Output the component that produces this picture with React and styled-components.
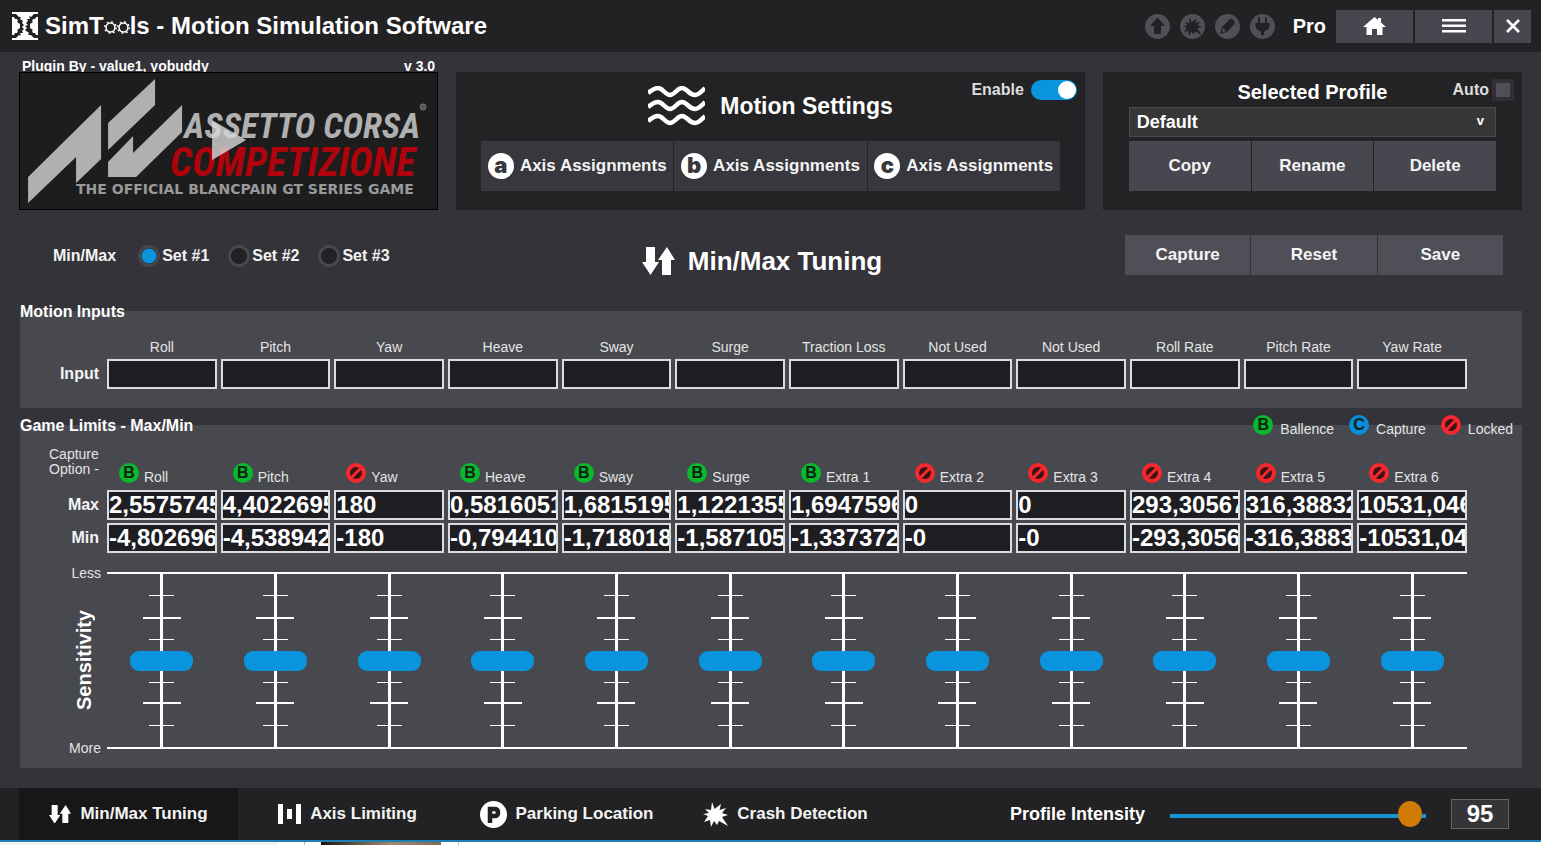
import React, { useState } from 'react'
import styled, { createGlobalStyle, css } from 'styled-components'

const GlobalStyle = createGlobalStyle`
*, *::before, *::after {
    box-sizing: border-box;
}

body {
    margin: 0;
    background: #34333a;
    color: #fff;
    font-family: "Liberation Sans", Arial, sans-serif;
}

h1, h2, h3, p {
    margin: 0;
    font-weight: 700;
}

button, input, select {
    margin: 0;
    font-family: inherit;
    color: inherit;
}
`

const Page = styled.div`
    min-height: 100vh;
    display: flex;
    flex-direction: column;
`

/* ---------- top bar ---------- */

const TopBar = styled.header`
    height: 52px;
    padding: 0 10px;
    display: flex;
    align-items: center;
    justify-content: space-between;
    background: #222224;
`

const Brand = styled.div`
    display: flex;
    align-items: center;
    gap: 6px;
`

const Title = styled.h1`
    font-size: 24px;
    line-height: 28px;
    white-space: nowrap;

    svg {
        display: inline-block;
    }
`

const TopRight = styled.div`
    display: flex;
    align-items: center;
`

const StatusIcons = styled.div`
    display: flex;
    gap: 10px;
    margin-right: 18px;
`

const Edition = styled.span`
    font-size: 20px;
    font-weight: 700;
    margin-right: 10px;
`

const WindowButtons = styled.div`
    display: flex;
    gap: 2px;
`

const Button = styled.button`
    border: 0;
    padding: 0;
    display: flex;
    align-items: center;
    justify-content: center;
    gap: 6px;
    cursor: pointer;
    color: #f4f4f4;
    font-size: 17px;
    font-weight: 700;
    white-space: nowrap;
    background: ${props => props.tone || '#48474f'};
`

const WindowButton = styled(Button)`
    width: ${props => (props.small ? '37px' : '77px')};
    height: 33px;
`

/* ---------- main area ---------- */

const Main = styled.main`
    padding: 7px 19px 20px;
`

const TopGrid = styled.div`
    display: grid;
    grid-template-columns: 2fr 3fr 2fr;
    gap: 18px;
    align-items: end;
`

const PluginInfo = styled.div`
    height: 13px;
    padding: 0 3px;
    display: flex;
    justify-content: space-between;
    font-size: 14px;
    font-weight: 700;
    line-height: 14px;
`

const GamePicture = styled.button`
    position: relative;
    display: block;
    width: 100%;
    height: 138px;
    padding: 0;
    border: 1px solid #000;
    background: #1d1d1d;
    cursor: pointer;

    svg {
        display: block;
        width: 100%;
        height: 100%;
    }
`

const Panel = styled.section`
    height: 138px;
    padding: 7px 8px 0;
    background: #232325;
`

const PanelHead = styled.div`
    display: grid;
    grid-template-columns: 1fr auto 1fr;
    height: ${props => props.height};
`

const MotionTitle = styled.h2`
    grid-column: 2;
    height: 54px;
    display: flex;
    align-items: center;
    gap: 15px;
    font-size: 23px;
    font-weight: 900;
`

const ProfileTitle = styled.h2`
    grid-column: 2;
    font-size: 20px;
    line-height: 26px;
`

const SwitchLabel = styled.label`
    justify-self: end;
    align-self: start;
    display: flex;
    align-items: center;
    gap: ${props => props.gap};
    font-size: 16px;
    font-weight: 700;
    line-height: 22px;
    color: #ddd;
`

const Toggle = styled.input`
    appearance: none;
    width: 46px;
    height: 20px;
    border-radius: 10px;
    background: #0b94de;
    display: flex;
    align-items: center;
    justify-content: flex-end;
    padding: 1px;

    &::before {
        content: '';
        width: 18px;
        height: 18px;
        border-radius: 50%;
        background: #fff;
    }

    &:not(:checked) {
        justify-content: flex-start;
        background: #48474f;
    }
`

const AutoCheck = styled.input`
    appearance: none;
    width: 22px;
    height: 22px;
    border: 4px solid #302f36;
    background: #504f57;

    &:checked {
        background: #0b94de;
    }
`

const ButtonRow = styled.div`
    display: grid;
    grid-template-columns: repeat(3, 1fr);
    gap: 1px;
    margin: 0 ${props => props.inset || '0'};

    ${Button} {
        height: ${props => props.height || '50px'};
    }
`

const LetterDisc = styled.span`
    width: 26px;
    height: 26px;
    border-radius: 50%;
    background: #fff;
    color: #38373d;
    font-family: Inter, "Liberation Sans", sans-serif;
    font-size: 22px;
    font-weight: 900;
    line-height: 24px;
    text-align: center;
`

const SelectBox = styled.div`
    position: relative;
    margin: 2px 18px 4px;

    select {
        display: block;
        appearance: none;
        width: 100%;
        height: 30px;
        padding: 0 7px;
        border: 1px solid #4a4a4c;
        border-radius: 0;
        background: #373738;
        font-size: 18px;
        font-weight: 700;
    }

    span {
        position: absolute;
        right: 12px;
        top: 6px;
        font-size: 13px;
        font-weight: 700;
        line-height: 16px;
        pointer-events: none;
    }
`

/* ---------- set row ---------- */

const SetRow = styled.div`
    margin-top: 25px;
    height: 76px;
    padding: 0 19px 0 2px;
    display: grid;
    grid-template-columns: 1fr auto 1fr;
    align-items: start;
`

const RadioGroup = styled.div`
    height: 42px;
    padding-left: 32px;
    display: flex;
    align-items: center;
    font-size: 16px;
    font-weight: 700;
    white-space: nowrap;
    color: #f4f4f4;
`

const RadioLabel = styled.label`
    margin-left: 19px;
    display: flex;
    align-items: center;
    gap: 2px;

    &:first-of-type {
        margin-left: 22px;
    }
`

const Radio = styled.input`
    appearance: none;
    width: 22px;
    height: 22px;
    border: 3px solid #48474d;
    border-radius: 50%;
    background: #222224;

    &:checked {
        background: radial-gradient(circle, #0b94de 0 7px, #222224 8px);
    }
`

const SetTitle = styled.h2`
    padding-top: 11px;
    display: flex;
    align-items: center;
    gap: 13px;
    font-size: 26px;
    line-height: 30px;
`

const SetButtons = styled.div`
    width: 378px;
    justify-self: end;
`

/* ---------- data panels ---------- */

const DataPanel = styled.section`
    margin-left: 1px;
    margin-bottom: ${props => (props.last ? '0' : '17px')};
    padding-bottom: ${props => (props.last ? '12px' : '19px')};
    background: #48484f;
`

const DataHead = styled.div`
    display: flex;
    justify-content: space-between;
    align-items: center;
    height: 18px;
    padding-right: 9px;
    transform: translateY(-8px);

    h3 {
        font-size: 16px;
        line-height: 18px;
    }
`

const Legend = styled.div`
    display: flex;
    gap: 15px;
`

const AxisGrid = styled.div`
    display: grid;
    grid-template-columns: 83px repeat(12, minmax(0, 1fr));
    column-gap: 4px;
    row-gap: ${props => props.rowGap};
    padding-top: ${props => props.top};
    padding-right: 55px;
    align-items: center;
`

const RowLabel = styled.span`
    padding-right: 4px;
    text-align: right;
    font-size: 16px;
    font-weight: 700;
    color: #f4f4f4;
`

const SmallText = styled.span`
    font-size: 14px;
    line-height: 16px;
    color: #e4e4e4;
    white-space: nowrap;
    text-align: ${props => props.align || 'left'};
`

const CaptureOption = styled(SmallText)`
    min-height: 40px;
    padding-left: 29px;
    line-height: 15px;
    align-self: start;
    white-space: normal;
`

const Field = styled.input`
    width: 100%;
    height: 30px;
    padding: 0;
    border: 2px solid #dcdcde;
    border-radius: 0;
    background: #1d1d22;
    font-size: 24px;
    font-weight: 700;
    line-height: 26px;
`

const Option = styled.div`
    display: flex;
    align-items: flex-end;
    gap: ${props => (props.inHead ? '7px' : '5px')};
    align-self: end;
    padding: ${props => (props.inHead ? '0' : '0 0 2px 12px')};
`

const Badge = styled.span`
    width: 20px;
    height: 20px;
    flex: none;
    margin-bottom: 2px;
    border-radius: 50%;
    text-align: center;
    font-size: 16px;
    font-weight: 700;
    line-height: 20px;
    color: #10220f;
    background: ${props => props.color};

    svg {
        display: block;
    }
`

const Sensitivity = styled.div`
    display: grid;
    grid-template-columns: 83px minmax(0, 1fr);
    column-gap: 4px;
    margin-top: 12px;
    padding-right: 55px;
`

const Scale = styled.div`
    display: grid;
    grid-template-rows: auto 1fr auto;
    padding-right: 2px;
    justify-items: end;

    h3 {
        align-self: center;
        margin-right: 6px;
        writing-mode: vertical-rl;
        transform: rotate(180deg);
        font-size: 20px;
        font-weight: 900;
        line-height: 22px;
    }
`

const Sliders = styled.div`
    display: grid;
    grid-template-columns: repeat(12, minmax(0, 1fr));
    column-gap: 4px;
    justify-items: center;
    margin: 7px 0;
    border-top: 2px solid #fff;
    border-bottom: 2px solid #fff;
`

const line = 'linear-gradient(#fff, #fff)'

const AxisSlider = styled.input`
    appearance: none;
    writing-mode: vertical-lr;
    width: 63px;
    height: 173px;
    background:
        ${line} 50% 50% / 3px 100%,
        ${line} 50% 12% / 25px 1px,
        ${line} 50% 25% / 38px 2px,
        ${line} 50% 38% / 25px 1px,
        ${line} 50% 63% / 25px 1px,
        ${line} 50% 75% / 38px 2px,
        ${line} 50% 88% / 25px 1px;
    background-repeat: no-repeat;

    &::-webkit-slider-thumb {
        appearance: none;
        width: 63px;
        height: 20px;
        border-radius: 9px;
        background: #0b94de;
    }
`

/* ---------- bottom bar ---------- */

const BottomBar = styled.footer`
    height: 54px;
    padding: 0 32px 0 19px;
    display: flex;
    justify-content: space-between;
    background: #222224;
    border-bottom: 2px solid #1d7fb4;
`

const Tabs = styled.nav`
    display: flex;
`

const Tab = styled(Button)`
    width: 219px;
    gap: 9px;
    background: transparent;

    ${props => props.active && css`
        background: #171717;
    `}
`

const Intensity = styled.div`
    display: flex;
    align-items: center;

    label {
        margin-right: 25px;
        font-size: 18px;
        font-weight: 700;
    }
`

const IntensityRange = styled.input`
    appearance: none;
    width: 264px;
    height: 26px;
    background: linear-gradient(#1593d3, #1593d3) 0 60% / 256px 4px no-repeat;

    &::-webkit-slider-thumb {
        appearance: none;
        width: 24px;
        height: 26px;
        border-radius: 50%;
        background: #cf7a04;
    }
`

const IntensityValue = styled.input`
    width: 58px;
    height: 30px;
    margin-left: 17px;
    padding: 0;
    border: 1px solid #66666a;
    background: #353538;
    font-size: 24px;
    font-weight: 700;
    text-align: center;
`

const Behind = styled.div`
    flex: 1;
    min-height: 3px;
    background:
        linear-gradient(90deg, #19130f, #6d5b49 40px, #a08a70 70px, #7c6a57) 321px 0 / 120px 100% no-repeat,
        linear-gradient(#bbb, #bbb) 304px 0 / 1px 100% no-repeat,
        linear-gradient(#bbb, #bbb) 458px 0 / 1px 100% no-repeat,
        linear-gradient(#f3f3f3, #f3f3f3) 0 0 / 278px 100% no-repeat,
        #fff;
`

/* ---------- drawings ---------- */

const SimLogo = () => (
    <svg width="29" height="28" viewBox="0 0 29 28" fill="#fff">
        <path d="M2 0H28V2H2ZM2 26H28V28H2Z" />
        <path d="M2 5L4 5L5 7L7 7L8 9L7 10L10 12V16L7 18L8 19L7 21L5 21L4 23L2 23Z" />
        <path d="M28 5L26 5L25 7L23 7L22 9L23 10L20 12V16L23 18L22 19L23 21L25 21L26 23L28 23Z" />
        <path d="M6 2H24L21 5L19 4L20 7L17 7L18 9L16 11L18 13L15 14L17 16L15 18L19 21L18 23L21 23L24 26H6L9 23L11 24L10 21L13 21L12 19L14 17L12 15L14 13L12 11L13 9L10 7L11 5L9 5Z" />
    </svg>
)

const Gear = () => (
    <svg width="13" height="13" viewBox="-6.5 -6.5 13 13">
        <circle r="4.400" fill="none" stroke="#fff" strokeWidth="1.500" />
        <circle r="5.700" fill="none" stroke="#fff" strokeWidth="1.500" strokeDasharray="1.800 2.677" />
    </svg>
)

const burst = 'M9 0L11.500 7L18 2L16.500 8L23 6L19 11L25 13L19 15L25 24L16 19L14 23L11 19L8 25L7 18L1 20L5 14L0 12L6 11L2 7L8 8Z'

const StatusIcon = ({ name }) => (
    <svg width="25" height="25" viewBox="0 0 25 25" fill="#222224">
        <circle cx="12.5" cy="12.5" r="12.5" fill="#515057" />
        {name === 'up' && <path d="M12.5 3.5L20 12H16V20H9V12H5Z" />}
        {name === 'crash' && <path d={burst} transform="translate(3 3) scale(.76)" />}
        {name === 'pen' && (
            <path d="M5 20L7 13L14.500 5.500Q16.500 4 18.500 6Q20.500 8 19 10.500L12 18ZM8 14L6.800 18.200L11 17Z" fillRule="evenodd" />
        )}
        {name === 'plug' && (
            <path d="M8 3.500H10V9H15V3.500H17V9H19.500V12Q19 16 14 17.500V21H11V17.500Q6 16 5.500 12V9H8Z" />
        )}
    </svg>
)

const HomeIcon = () => (
    <svg width="23" height="19" viewBox="0 0 23 19" fill="#fff">
        <path d="M11.500 0L15 3V1H18V5.500L23 10H19.500V18H14V12H9V18H3.500V10H0Z" />
    </svg>
)

const MenuIcon = () => (
    <svg width="24" height="14" viewBox="0 0 24 14" fill="#fff">
        <path d="M0 0H24V2.500H0ZM0 5.500H24V8H0ZM0 11H24V13.500H0Z" />
    </svg>
)

const CloseIcon = () => (
    <svg width="14" height="14" viewBox="0 0 14 14" stroke="#fff" strokeWidth="2.600">
        <path d="M1 1L13 13M13 1L1 13" />
    </svg>
)

const Waves = () => (
    <svg width="57" height="40" viewBox="0 0 57 40" fill="none" stroke="#fff" strokeWidth="4.500">
        {[6, 20, 34].map(y => (
            <path key={y} d={`M0 ${y + 1}C4 ${y - 2} 6 ${y - 4} 10 ${y - 4}C15 ${y - 4} 17 ${y + 3} 22 ${y + 3}C27 ${y + 3} 29 ${y - 4} 34 ${y - 4}C39 ${y - 4} 41 ${y + 3} 47 ${y + 3}C51 ${y + 3} 53 ${y} 57 ${y - 4}`} />
        ))}
    </svg>
)

const UpDown = ({ size }) => (
    <svg width={size} height={size * 28 / 33} viewBox="0 0 33 28" fill="#fff">
        <path d="M4 0H13V15H17L8.500 28L0 15H4Z" />
        <path d="M25 0L33 13H29V28H20V13H16Z" />
    </svg>
)

const Bars = () => (
    <svg width="23" height="20" viewBox="0 0 23 20" fill="#fff">
        <path d="M0 0H5V20H0ZM9 5H14V15H9ZM18 0H23V20H18Z" />
    </svg>
)

const Parking = () => (
    <svg width="27" height="27" viewBox="0 0 27 27">
        <circle cx="13.500" cy="13.500" r="13.500" fill="#fff" />
        <path d="M10 22V8H14.500Q18 8 18 11.500Q18 15 14.500 15H10" fill="none" stroke="#222224" strokeWidth="4.500" />
    </svg>
)

const Crash = () => (
    <svg width="25" height="25" viewBox="0 0 25 25" fill="#fff">
        <path d={burst} />
    </svg>
)

const Locked = () => (
    <svg width="20" height="20" viewBox="0 0 20 20">
        <circle cx="10" cy="10" r="8" fill="#3a1315" stroke="#f5282d" strokeWidth="4" />
        <path d="M5 15L15 5" stroke="#f5282d" strokeWidth="3" />
    </svg>
)

const narrow = 'Roboto Condensed, Open Sans Condensed, Liberation Sans'

const GameLogo = () => (
    <svg viewBox="0 0 417 136">
        <g fill="#b0b0b0">
            <path d="M81 32V86L56 110V84L8 130V104Z" />
            <path d="M135 6V32L88 77V50Z" />
            <path d="M162 32V59L116 104H88V89L113 63V80Z" />
            <text x="164" y="65" fontSize="35" fontWeight="700" fontStyle="italic" fontFamily={narrow}>ASSETTO CORSA</text>
            <text x="56" y="121" fontSize="14" fontWeight="700" fontFamily="DejaVu Sans" fill="#999">THE OFFICIAL BLANCPAIN GT SERIES GAME</text>
        </g>
        <text x="150" y="103" fontSize="40" fontWeight="700" fontStyle="italic" fill="#b0030c" fontFamily={narrow}>COMPETIZIONE</text>
        <circle cx="403" cy="34" r="3" fill="#555" stroke="#777" />
        <path d="M192 47L226 67L192 87Z" fill="#d8d8d8" fillOpacity=".8" />
    </svg>
)

const OptionBadge = ({ kind }) => {
    if (kind === 'L') return <Badge><Locked /></Badge>
    return <Badge color={kind === 'B' ? '#08b92c' : '#0b8ddb'}>{kind}</Badge>
}

/* ---------- data ---------- */

const inputs = ['Roll', 'Pitch', 'Yaw', 'Heave', 'Sway', 'Surge', 'Traction Loss', 'Not Used', 'Not Used', 'Roll Rate', 'Pitch Rate', 'Yaw Rate']

const limits = [
    { name: 'Roll', kind: 'B', max: '2,5575745', min: '-4,802696' },
    { name: 'Pitch', kind: 'B', max: '4,4022695', min: '-4,538942' },
    { name: 'Yaw', kind: 'L', max: '180', min: '-180' },
    { name: 'Heave', kind: 'B', max: '0,5816051', min: '-0,794410' },
    { name: 'Sway', kind: 'B', max: '1,6815195', min: '-1,718018' },
    { name: 'Surge', kind: 'B', max: '1,1221355', min: '-1,587105' },
    { name: 'Extra 1', kind: 'B', max: '1,6947596', min: '-1,337372' },
    { name: 'Extra 2', kind: 'L', max: '0', min: '-0' },
    { name: 'Extra 3', kind: 'L', max: '0', min: '-0' },
    { name: 'Extra 4', kind: 'L', max: '293,30567', min: '-293,3056' },
    { name: 'Extra 5', kind: 'L', max: '316,38832', min: '-316,3883' },
    { name: 'Extra 6', kind: 'L', max: '10531,046', min: '-10531,04' },
]

const tabs = [
    { name: 'Min/Max Tuning', icon: <UpDown size={22} /> },
    { name: 'Axis Limiting', icon: <Bars /> },
    { name: 'Parking Location', icon: <Parking /> },
    { name: 'Crash Detection', icon: <Crash /> },
]

const App = () => {
    const [tab, setTab] = useState('Min/Max Tuning')
    const [intensity, setIntensity] = useState(95)

    return (
        <Page>
            <GlobalStyle />
            <TopBar>
                <Brand>
                    <SimLogo />
                    <Title>SimT<Gear /><Gear />ls - Motion Simulation Software</Title>
                </Brand>
                <TopRight>
                    <StatusIcons>
                        {['up', 'crash', 'pen', 'plug'].map(name => <StatusIcon key={name} name={name} />)}
                    </StatusIcons>
                    <Edition>Pro</Edition>
                    <WindowButtons>
                        <WindowButton aria-label="Home"><HomeIcon /></WindowButton>
                        <WindowButton aria-label="Menu"><MenuIcon /></WindowButton>
                        <WindowButton small="true" aria-label="Close"><CloseIcon /></WindowButton>
                    </WindowButtons>
                </TopRight>
            </TopBar>

            <Main>
                <TopGrid>
                    <div>
                        <PluginInfo>
                            <span>Plugin By - value1, yobuddy</span>
                            <span>v 3.0</span>
                        </PluginInfo>
                        <GamePicture aria-label="Play"><GameLogo /></GamePicture>
                    </div>

                    <Panel>
                        <PanelHead height="62px">
                            <MotionTitle><Waves />Motion Settings</MotionTitle>
                            <SwitchLabel gap="7px">
                                Enable
                                <Toggle type="checkbox" role="switch" defaultChecked />
                            </SwitchLabel>
                        </PanelHead>
                        <ButtonRow inset="17px">
                            {['a', 'b', 'c'].map(letter => (
                                <Button key={letter} tone="#38373d">
                                    <LetterDisc>{letter}</LetterDisc>
                                    Axis Assignments
                                </Button>
                            ))}
                        </ButtonRow>
                    </Panel>

                    <Panel>
                        <PanelHead height="26px">
                            <ProfileTitle>Selected Profile</ProfileTitle>
                            <SwitchLabel gap="3px">
                                Auto
                                <AutoCheck type="checkbox" />
                            </SwitchLabel>
                        </PanelHead>
                        <SelectBox>
                            <select aria-label="Selected Profile">
                                <option>Default</option>
                            </select>
                            <span>v</span>
                        </SelectBox>
                        <ButtonRow inset="18px">
                            <Button>Copy</Button>
                            <Button>Rename</Button>
                            <Button>Delete</Button>
                        </ButtonRow>
                    </Panel>
                </TopGrid>

                <SetRow>
                    <RadioGroup>
                        Min/Max
                        {[1, 2, 3].map(n => (
                            <RadioLabel key={n}>
                                <Radio type="radio" name="set" defaultChecked={n === 1} />
                                Set #{n}
                            </RadioLabel>
                        ))}
                    </RadioGroup>
                    <SetTitle><UpDown size={33} />Min/Max Tuning</SetTitle>
                    <SetButtons>
                        <ButtonRow height="40px">
                            <Button tone="#504f57">Capture</Button>
                            <Button tone="#504f57">Reset</Button>
                            <Button tone="#504f57">Save</Button>
                        </ButtonRow>
                    </SetButtons>
                </SetRow>

                <DataPanel>
                    <DataHead><h3>Motion Inputs</h3></DataHead>
                    <AxisGrid rowGap="4px" top="10px">
                        <span />
                        {inputs.map((name, i) => <SmallText key={i} align="center">{name}</SmallText>)}
                        <RowLabel>Input</RowLabel>
                        {inputs.map((name, i) => <Field key={i} aria-label={`Input ${name}`} />)}
                    </AxisGrid>
                </DataPanel>

                <DataPanel last>
                    <DataHead>
                        <h3>Game Limits - Max/Min</h3>
                        <Legend>
                            <Option inHead><OptionBadge kind="B" /><SmallText>Ballence</SmallText></Option>
                            <Option inHead><OptionBadge kind="C" /><SmallText>Capture</SmallText></Option>
                            <Option inHead><OptionBadge kind="L" /><SmallText>Locked</SmallText></Option>
                        </Legend>
                    </DataHead>
                    <AxisGrid rowGap="3px" top="4px">
                        <CaptureOption>Capture Option -</CaptureOption>
                        {limits.map(axis => (
                            <Option key={axis.name}>
                                <OptionBadge kind={axis.kind} />
                                <SmallText>{axis.name}</SmallText>
                            </Option>
                        ))}
                        <RowLabel>Max</RowLabel>
                        {limits.map(axis => <Field key={axis.name} defaultValue={axis.max} aria-label={`Max ${axis.name}`} />)}
                        <RowLabel>Min</RowLabel>
                        {limits.map(axis => <Field key={axis.name} defaultValue={axis.min} aria-label={`Min ${axis.name}`} />)}
                    </AxisGrid>
                    <Sensitivity>
                        <Scale>
                            <SmallText>Less</SmallText>
                            <h3>Sensitivity</h3>
                            <SmallText>More</SmallText>
                        </Scale>
                        <Sliders>
                            {limits.map(axis => (
                                <AxisSlider key={axis.name} type="range" defaultValue={50} aria-label={`Sensitivity ${axis.name}`} />
                            ))}
                        </Sliders>
                    </Sensitivity>
                </DataPanel>
            </Main>

            <BottomBar>
                <Tabs>
                    {tabs.map(({ name, icon }) => (
                        <Tab key={name} active={tab === name ? 1 : 0} onClick={() => setTab(name)}>
                            {icon}
                            {name}
                        </Tab>
                    ))}
                </Tabs>
                <Intensity>
                    <label htmlFor="intensity">Profile Intensity</label>
                    <IntensityRange
                        id="intensity"
                        type="range"
                        value={intensity}
                        onChange={e => setIntensity(Number(e.target.value))}
                    />
                    <IntensityValue aria-label="Profile Intensity value" value={intensity} readOnly />
                </Intensity>
            </BottomBar>
            <Behind />
        </Page>
    )
}

export default App
